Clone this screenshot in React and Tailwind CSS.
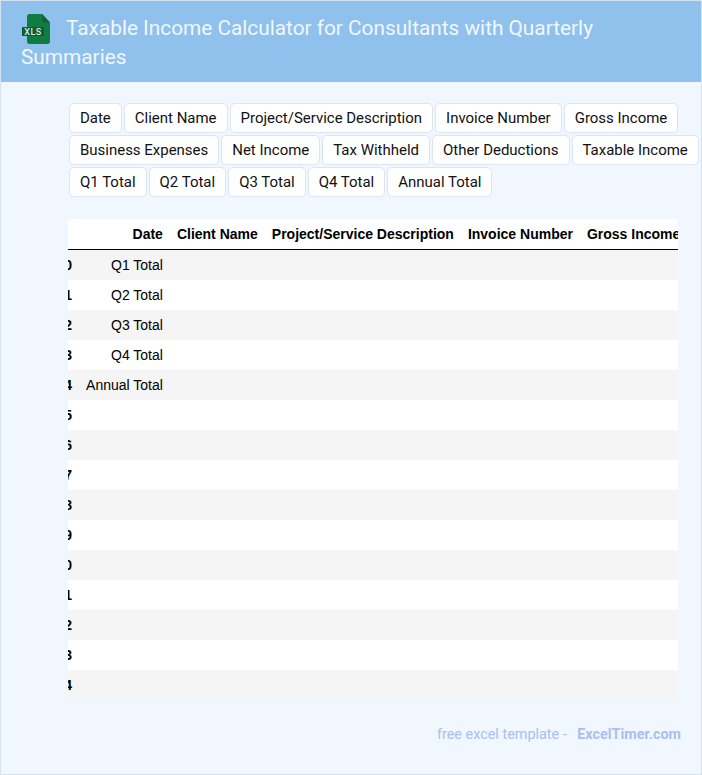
import React from 'react';

const TAGS = [
  'Date', 'Client Name', 'Project/Service Description', 'Invoice Number', 'Gross Income',
  'Business Expenses', 'Net Income', 'Tax Withheld', 'Other Deductions', 'Taxable Income',
  'Q1 Total', 'Q2 Total', 'Q3 Total', 'Q4 Total', 'Annual Total'
];

const COLUMNS = ['Date', 'Client Name', 'Project/Service Description', 'Invoice Number', 'Gross Income', 'Business Expenses'];

const ROWS = [
  [10, 'Q1 Total'], [11, 'Q2 Total'], [12, 'Q3 Total'], [13, 'Q4 Total'], [14, 'Annual Total'],
  [15, ''], [16, ''], [17, ''], [18, ''], [19, ''], [20, ''], [21, ''], [22, ''], [23, ''], [24, '']
];

function XlsIcon() {
  return (
    <svg width="30" height="30" viewBox="0 0 30 30" className="float-left mr-[15px] mb-[-4px]">
      <path d="M6 2.5C6 1.100 7 0 8.400 0H21l8 8.500v19c0 1.400-1 2.500-2.400 2.500H8.400C7 30 6 28.900 6 27.500Z" fill="#107c41" />
      <path d="M21 0l8 8.500h-5.600C22 8.500 21 7.500 21 6Z" fill="#0c6434" />
      <rect x="1" y="13" width="22" height="9" fill="#0e5c33" />
      <text x="12" y="20.500" textAnchor="middle" fontSize="9" fontWeight="500" letterSpacing="0.5" fill="#dcebe2" fontFamily="Roboto, sans-serif">XLS</text>
    </svg>
  );
}

export default function App() {
  return (
    <div className="w-[702px] h-[775px] box-border overflow-hidden bg-[#f0f7ff] border border-[#d5e2f0] font-['Roboto',sans-serif]">
      {/* header */}
      <div className="h-[81px] box-border bg-[#90c0ec] pl-5 pr-5 pt-[13px] text-[20.800px] leading-[29px] text-[#f0f7ff]">
        <XlsIcon />
        Taxable Income Calculator for Consultants with Quarterly Summaries
      </div>

      {/* column tags */}
      <div className="flex flex-wrap gap-x-[2px] gap-y-[2px] pl-[68px] pt-[21px]">
        {TAGS.map((tag) => (
          <span key={tag} className="h-[30px] box-border px-[10px] rounded-[5px] border border-[#dce6f2] bg-white text-[14.980px] leading-[28px] text-[#111] whitespace-nowrap">
            {tag}
          </span>
        ))}
      </div>

      {/* table, scrolled a little to the right */}
      <div className="ml-[67px] mt-[22px] w-[610px] overflow-hidden bg-white">
        <table className="ml-[-18.500px] border-collapse font-['Liberation_Sans',Arial,sans-serif] text-[14px] leading-4 text-black whitespace-nowrap">
          <thead>
            <tr className="border-b border-black text-right">
              <th className="p-[7px] font-bold"><span className="invisible">24</span></th>
              {COLUMNS.map((col) => (
                <th key={col} className="p-[7px] font-bold">{col}</th>
              ))}
            </tr>
          </thead>
          <tbody>
            {ROWS.map(([idx, label]) => (
              <tr key={idx} className={idx % 2 === 0 ? 'bg-[#f5f5f5]' : 'bg-white'}>
                <th className="p-[7px] text-right font-bold">{idx}</th>
                <td className="p-[7px] text-right">{label}</td>
                <td className="p-[7px]" colSpan={5}>&nbsp;</td>
              </tr>
            ))}
          </tbody>
        </table>
      </div>

      {/* footer */}
      <div className="mt-[25px] pr-5 text-right text-[14.400px] leading-[20px] text-[#a9bff0]">
        free excel template - <span className="ml-[7px] font-bold">ExcelTimer.com</span>
      </div>
    </div>
  );
}
